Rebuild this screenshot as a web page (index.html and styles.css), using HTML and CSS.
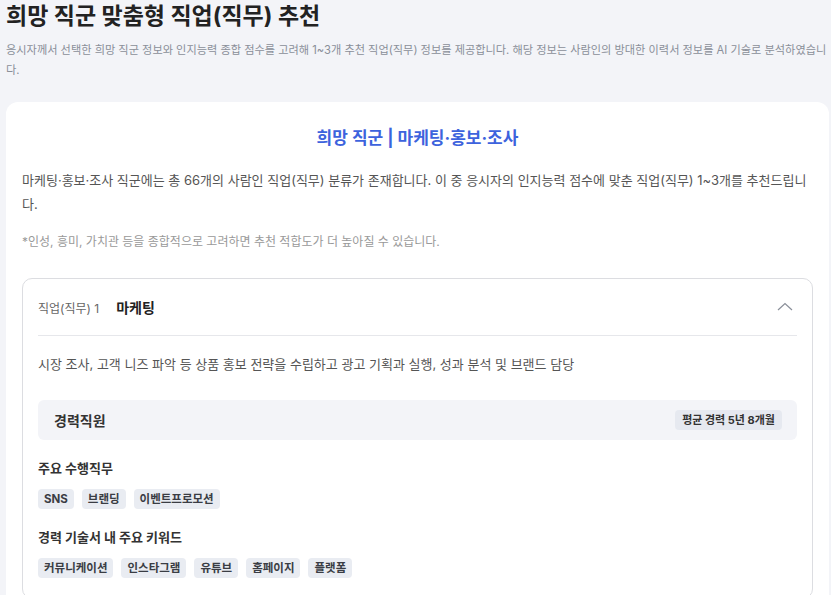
FILE: index.html
```html
<!DOCTYPE html>
<html lang="ko">
<head>
  <meta charset="UTF-8" />
  <title>희망 직군 맞춤형 직업(직무) 추천</title>
  <meta name="viewport" content="width=device-width, initial-scale=1.0" />
  <link rel="stylesheet" href="styles.css">
</head>
<body>

  <!-- 상단 설명 -->
  <h1 class="page-title">희망 직군 맞춤형 직업(직무) 추천</h1>
  <p class="page-desc">응시자께서 선택한 희망 직군 정보와 인지능력 종합 점수를 고려해 1~3개 추천 직업(직무) 정보를 제공합니다. 해당 정보는 사람인의 방대한 이력서 정보를 AI 기술로 분석하였습니다.</p>

  <!-- 본문 카드 -->
  <div class="card">
    <h2 class="card-title">희망 직군 | 마케팅·홍보·조사</h2>
    <p class="card-text">마케팅·홍보·조사 직군에는 총 66개의 사람인 직업(직무) 분류가 존재합니다. 이 중 응시자의 인지능력 점수에 맞춘 직업(직무) 1~3개를 추천드립니다.</p>
    <p class="card-note">*인성, 흥미, 가치관 등을 종합적으로 고려하면 추천 적합도가 더 높아질 수 있습니다.</p>

    <div class="job">
      <div class="job-head">
        <span class="job-label">직업(직무) 1</span>
        <span class="job-name">마케팅</span>
        <svg class="job-toggle" width="16" height="9" viewBox="0 0 16 9">
          <path d="M1 8 L8 1.5 L15 8" fill="none" stroke="#8a8f99" stroke-width="1.2"/>
        </svg>
      </div>
      <div class="job-body">
        <p class="job-desc">시장 조사, 고객 니즈 파악 등 상품 홍보 전략을 수립하고 광고 기획과 실행, 성과 분석 및 브랜드 담당</p>

        <div class="career-bar">
          <span class="career-title">경력직원</span>
          <span class="career-badge">평균 경력 5년 8개월</span>
        </div>

        <div class="section-title">주요 수행직무</div>
        <div class="tags">
          <span class="tag">SNS</span>
          <span class="tag">브랜딩</span>
          <span class="tag">이벤트프로모션</span>
        </div>

        <div class="section-title">경력 기술서 내 주요 키워드</div>
        <div class="tags">
          <span class="tag">커뮤니케이션</span>
          <span class="tag">인스타그램</span>
          <span class="tag">유튜브</span>
          <span class="tag">홈페이지</span>
          <span class="tag">플랫폼</span>
        </div>
      </div>
    </div>
  </div>

</body>
</html>
```

FILE: styles.css
```css
body {
  margin: 0;
  padding: 0 2px 0 6px;
  background-color: #f3f4f8;
  font-family: Inter, "Noto Sans CJK KR", sans-serif;
  color: #222;
}

.page-title {
  margin: 0;
  font-size: 23px;
  line-height: 32px;
  font-weight: 700;
  color: #222;
}

.page-desc {
  margin: 8px -1px 0 0;
  font-size: 11.2px;
  line-height: 20px;
  color: #8a8f99;
  word-break: break-all;
}

.card {
  margin-top: 22px;
  background-color: #fff;
  border-radius: 12px;
  padding: 24px 16px 40px;
}

.card-title {
  margin: 0;
  text-align: center;
  font-size: 17px;
  line-height: 24px;
  font-weight: 700;
  color: #3d63dd;
}

.card-text {
  margin: 18px 0 0;
  font-size: 13px;
  line-height: 24px;
  color: #555;
  word-break: break-all;
}

.card-note {
  margin: 16px 0 0;
  font-size: 12px;
  line-height: 20px;
  color: #999;
}

.job {
  margin-top: 26px;
  border: 1px solid #dcdde1;
  border-radius: 10px;
}

.job-head {
  display: flex;
  align-items: center;
  height: 56px;
  margin: 0 15px;
  border-bottom: 1px solid #e6e7eb;
}

.job-label {
  font-size: 12px;
  color: #666;
}

.job-name {
  margin-left: 17px;
  font-size: 14px;
  font-weight: 700;
  color: #222;
}

.job-toggle {
  margin-left: auto;
  margin-right: 4px;
  margin-top: -2px;
}

.job-body {
  padding: 18px 15px 20px;
}

.job-desc {
  margin: 0;
  font-size: 13px;
  line-height: 20px;
  color: #555;
}

.career-bar {
  display: flex;
  justify-content: space-between;
  align-items: center;
  margin-top: 26px;
  height: 40px;
  padding: 0 15px 0 16px;
  background-color: #f3f4f8;
  border-radius: 6px;
}

.career-title {
  font-size: 14px;
  font-weight: 700;
  color: #333;
}

.career-badge {
  font-size: 11px;
  font-weight: 700;
  line-height: 20px;
  padding: 0 7px;
  border-radius: 4px;
  background-color: #e6e9f0;
  color: #333;
}

.section-title {
  margin-top: 18px;
  font-size: 13px;
  line-height: 20px;
  font-weight: 700;
  color: #333;
}

.tags {
  display: flex;
  gap: 8px;
  margin-top: 11px;
}

.tag {
  font-size: 11.5px;
  font-weight: 700;
  line-height: 20px;
  padding: 0 6px;
  border-radius: 4px;
  background-color: #e9ecf2;
  color: #3a3d44;
}
```
